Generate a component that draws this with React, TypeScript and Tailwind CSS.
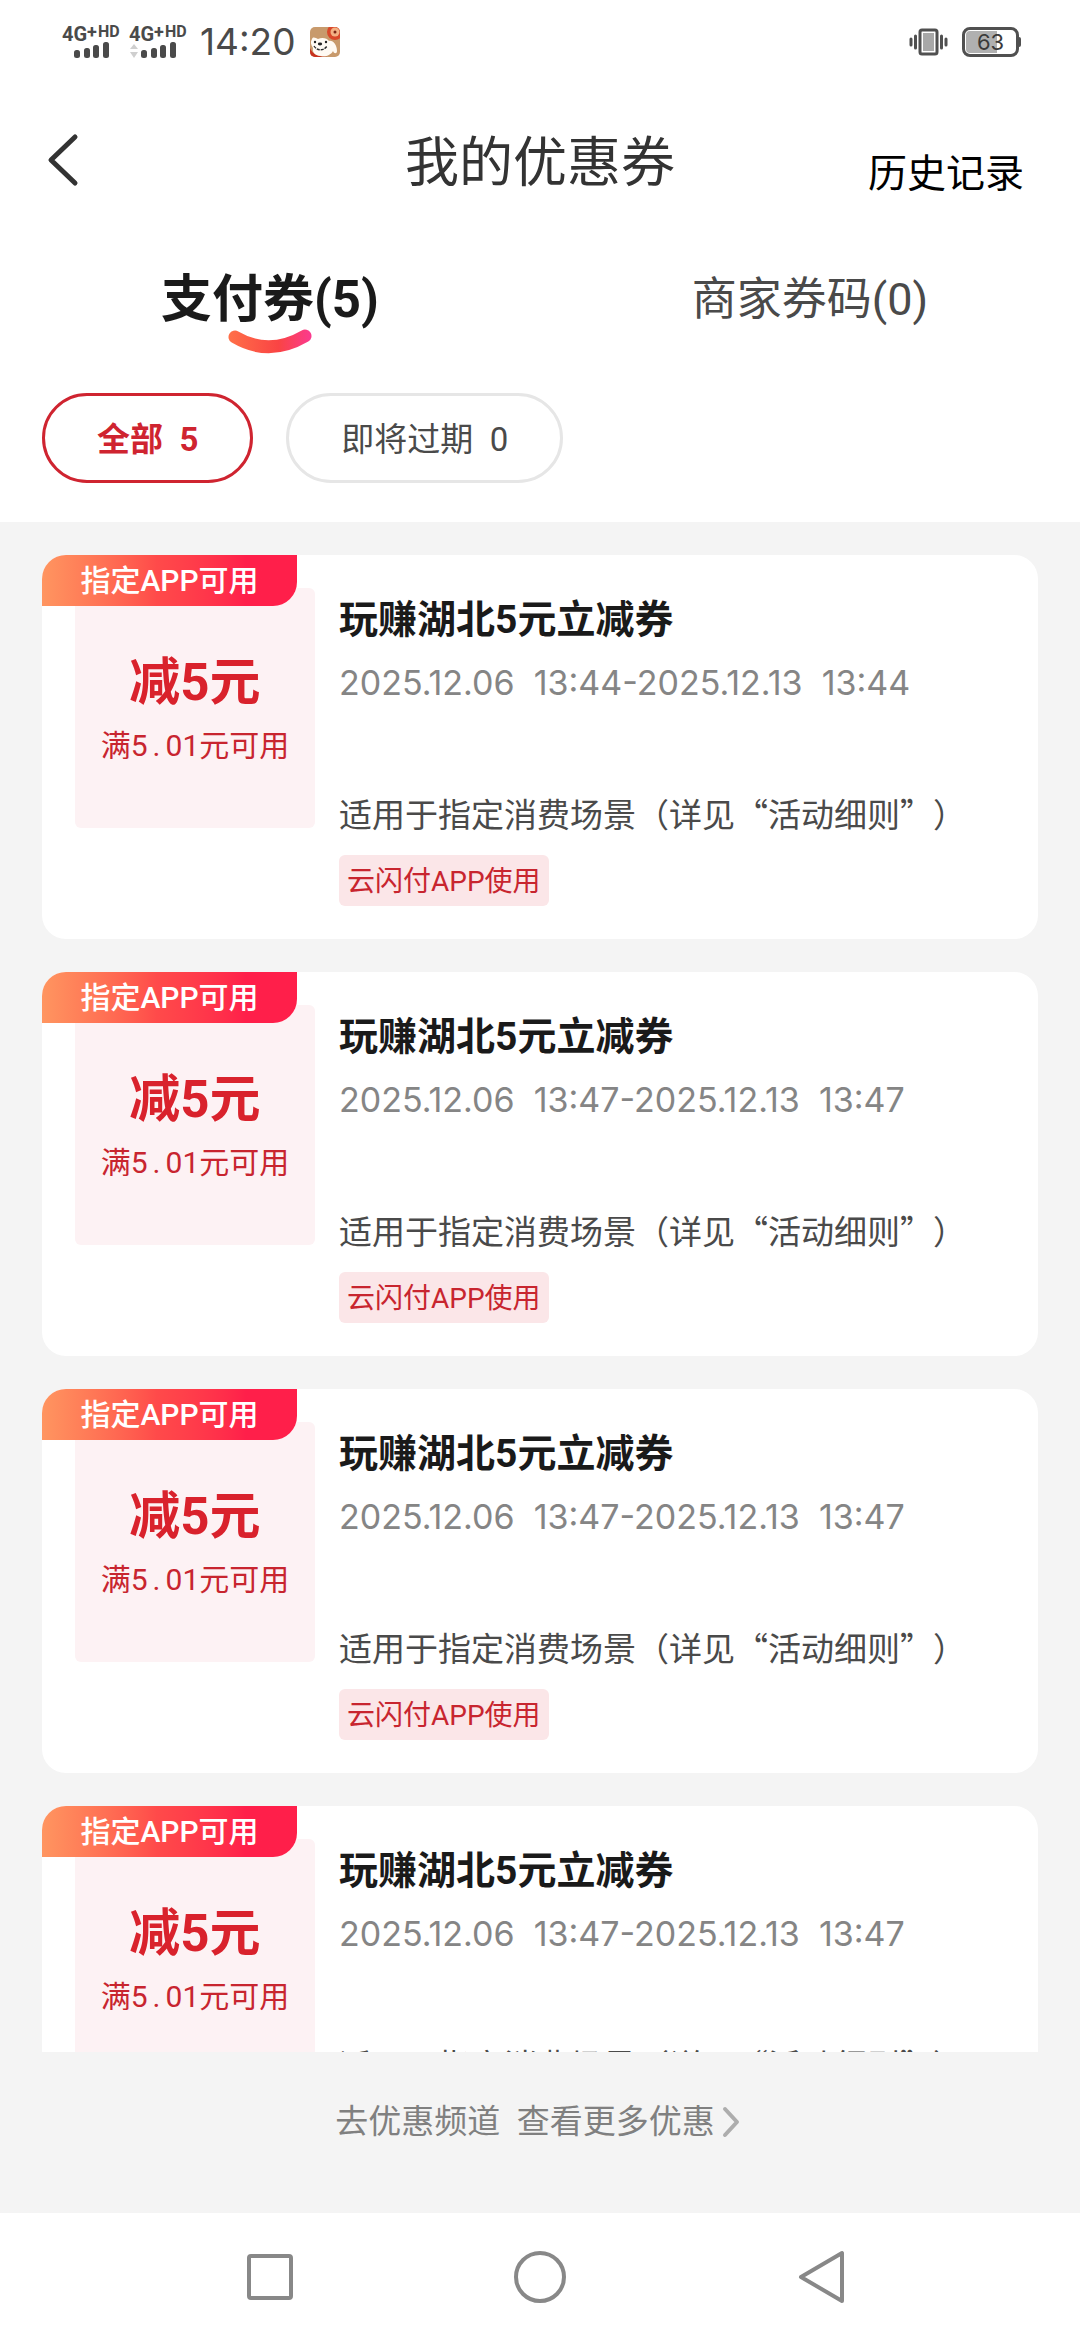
import React, { useState } from "react";

type Coupon = {
  id: number;
  badge: string;
  amount: string;
  title: string;
  start: string;
  end: string;
  scope: string;
  tag: string;
};

const times = ["13:44", "13:47", "13:47", "13:47", "13:47"];

const coupons: Coupon[] = times.map((time, i) => ({
  id: i,
  badge: "指定APP可用",
  amount: "减5元",
  title: "玩赚湖北5元立减券",
  start: `2025.12.06  ${time}`,
  end: `2025.12.13  ${time}`,
  scope: "适用于指定消费场景（详见“活动细则”）",
  tag: "云闪付APP使用",
}));

// network label + signal bars, data adds the small up/down arrows
function Signal({ data = false }: { data?: boolean }) {
  return (
    <div className="w-[59px] font-['Roboto'] font-bold text-[#4a4a4a]">
      <div className="flex h-4 items-start leading-4">
        <span className="text-[20px]">4G</span>
        <span className="text-[18px] leading-3">+</span>
        <span className="ml-px text-[16px] leading-3">HD</span>
      </div>
      <svg width="59" height="17" viewBox="0 0 59 17" fill="#4a4a4a">
        {data && <path d="M1 7l4-5 4 5zM1 10l4 6 4-6z" fill="#cfcfcf" />}
        <rect x="12" y="8" width="6" height="8" rx="2.5" />
        <rect x="22" y="6" width="6" height="10" rx="2.5" />
        <rect x="31" y="3" width="6" height="13" rx="2.5" />
        <rect x="41" y="0" width="6" height="16" rx="2.5" />
      </svg>
    </div>
  );
}

function PuppyIcon() {
  return (
    <svg width="30" height="30" viewBox="0 0 30 30">
      <defs>
        <clipPath id="puppy">
          <rect width="30" height="30" rx="5" />
        </clipPath>
      </defs>
      <g clipPath="url(#puppy)">
        <rect width="30" height="30" fill="#c89a6c" />
        <path d="M0 21c2 6 9 9 18 9H0z" fill="#c8321e" />
        <circle cx="25" cy="5" r="8" fill="#d9482a" />
        <circle cx="25" cy="5" r="4.5" fill="#f3b184" />
        <circle cx="25" cy="5" r="1.5" fill="#7c2415" />
        <path
          d="M2 12c1-3 4-1 6 0 4-2 9-1 11 2 4-1 8 4 8 10 0 3-3 3-4 0-2 4-7 6-12 5-6 0-9-4-8-8-2-3-3-6-1-9z"
          fill="#fffaf3"
        />
        <path d="M4 19c3 5 10 5 13 0" stroke="#2b2b2b" strokeWidth="1.4" strokeDasharray="3 1" fill="none" />
        <ellipse cx="10" cy="17" rx="2.2" ry="1.4" fill="#222" />
        <circle cx="5" cy="15" r="1.2" fill="#222" />
        <circle cx="16" cy="15" r="1.2" fill="#222" />
      </g>
    </svg>
  );
}

function StatusBar() {
  return (
    <div className="flex h-[84px] items-center justify-between pr-[59px] pl-[62px]">
      <div className="flex items-center">
        <Signal />
        <div className="ml-2">
          <Signal data />
        </div>
        <span className="ml-3 font-['Inter'] text-[37px] leading-9 text-[#4a4a4a]">14:20</span>
        <div className="ml-3.5">
          <PuppyIcon />
        </div>
      </div>
      <div className="flex items-center gap-3.5">
        <svg width="39" height="30" viewBox="0 0 39 30" fill="none">
          <g stroke="#505050" strokeWidth="3" strokeLinecap="round">
            <path d="M2 12v6M6.500 9v12M32.500 9v12M37 12v6" />
          </g>
          <rect x="11" y="3" width="17" height="24" rx="2" stroke="#505050" strokeWidth="3" />
          <rect x="14" y="6" width="11" height="18" fill="#a8a8a8" />
        </svg>
        <div className="flex items-center">
          <div className="relative flex h-[30px] w-[57px] items-center justify-center rounded-lg border-3 border-[#505050]">
            <div className="absolute inset-y-px left-px w-[60%] rounded-l bg-[#b0b0b0]" />
            <span className="relative font-['Inter'] text-[22px] leading-6 text-[#3a3a3a]">63</span>
          </div>
          <div className="h-2.5 w-0.5 rounded-r bg-[#505050]" />
        </div>
      </div>
    </div>
  );
}

function CouponCard({ coupon }: { coupon: Coupon }) {
  return (
    <li className="relative flex shrink-0 gap-6 rounded-3xl bg-white p-[33px]">
      <div className="absolute top-0 left-0 flex h-[51px] w-[255px] items-center justify-center rounded-tl-3xl rounded-br-3xl bg-linear-to-r from-[#ff9560] via-[#ff4a4a] via-45% to-[#ff1f4a] to-80% text-[30px] font-medium text-white">
        {coupon.badge}
      </div>
      <div className="h-60 w-60 shrink-0 rounded-md bg-[#fdf2f4] pt-[60px] text-center text-[#d9222c]">
        <div className="text-[51px] leading-[70px] font-bold">{coupon.amount}</div>
        <div className="text-[30px] leading-[56px] text-[#c8252f]">
          满5<span className="inline-block w-[18px]">.</span>01元可用
        </div>
      </div>
      <div className="min-w-0 flex-1">
        <h2 className="text-[39px] leading-[64px] font-bold text-[#1a1a1a]">{coupon.title}</h2>
        <p className="font-['Inter'] text-[34px] leading-[62px] whitespace-pre text-[#858585]">
          {coupon.start}-{coupon.end}
        </p>
        <p className="mt-[74px] font-['Noto_Sans_CJK_SC',sans-serif] text-[33px] leading-[50px] whitespace-nowrap text-[#4a4a4a] [text-spacing-trim:space-all]">
          {coupon.scope}
        </p>
        <div className="mt-[17px] inline-flex h-[51px] items-center rounded-md bg-[#fbe6e8] px-2 pt-0.5 text-[28px] text-[#c8252f]">
          {coupon.tag}
        </div>
      </div>
    </li>
  );
}

export default function App() {
  const [tab, setTab] = useState(0);
  const [filter, setFilter] = useState(0);

  const tabs = ["支付券(5)", "商家券码(0)"];
  const filters = ["全部  5", "即将过期  0"];

  return (
    <main className="flex h-screen flex-col bg-white font-['Roboto','Noto_Sans_CJK_SC',sans-serif]">
      <StatusBar />

      <header className="grid h-[156px] grid-cols-3 items-center px-[42px]">
        <button aria-label="返回" className="w-fit pb-1">
          <svg width="42" height="54" viewBox="0 0 42 54" fill="none" stroke="#333" strokeWidth="5" strokeLinecap="round" strokeLinejoin="round">
            <path d="M33 4L9 27l24 23" />
          </svg>
        </button>
        <h1 className="pt-1 text-center text-[54px] leading-[60px] whitespace-nowrap text-[#333]">我的优惠券</h1>
        <a href="#history" className="pt-6 pr-3.5 text-right text-[39px] text-black">
          历史记录
        </a>
      </header>

      <nav className="grid h-[120px] grid-cols-2">
        {tabs.map((name, i) => (
          <button
            key={name}
            onClick={() => setTab(i)}
            className={
              tab === i
                ? "relative text-[51px] font-bold text-[#1a1a1a]"
                : "relative text-[45px] text-[#4a4a4a]"
            }
          >
            {name}
            {/* smile under the active tab */}
            {tab === i && (
              <svg className="absolute inset-x-0 bottom-1.5 mx-auto" width="84" height="25" viewBox="0 0 84 25" fill="none">
                <defs>
                  <linearGradient id="smile" x1="0" y1="0" x2="84" y2="0" gradientUnits="userSpaceOnUse">
                    <stop offset="0" stopColor="#ff7048" />
                    <stop offset="0.6" stopColor="#fa4444" />
                    <stop offset="1" stopColor="#fb3a90" />
                  </linearGradient>
                </defs>
                <path d="M7 8Q41 28 77 7" stroke="url(#smile)" strokeWidth="13" strokeLinecap="round" />
              </svg>
            )}
          </button>
        ))}
      </nav>

      <div className="flex gap-[33px] px-[42px] pt-[33px] pb-[39px]">
        {filters.map((name, i) => (
          <button
            key={name}
            onClick={() => setFilter(i)}
            className={
              filter === i
                ? "h-[90px] rounded-full border-3 border-[#cf2430] px-[52px] pt-1 text-[33px] font-bold whitespace-pre text-[#cf2430]"
                : "h-[90px] rounded-full border-3 border-[#e6e6e6] px-[52px] pt-1 text-[33px] whitespace-pre text-[#4a4a4a]"
            }
          >
            {name}
          </button>
        ))}
      </div>

      <ul className="flex min-h-0 flex-1 flex-col gap-[33px] overflow-y-auto bg-[#f4f4f4] px-[42px] pt-[33px] [scrollbar-width:none]">
        {coupons.map((coupon) => (
          <CouponCard key={coupon.id} coupon={coupon} />
        ))}
      </ul>

      <div className="flex h-[161px] items-center justify-center bg-[#f4f4f4] pr-1 pb-[22px]">
        <a href="#more" className="flex items-center gap-1.5 text-[33px] leading-[50px] whitespace-pre text-[#808080]">
          去优惠频道  查看更多优惠
          <svg width="20" height="32" viewBox="0 0 20 32" fill="none" stroke="#adadad" strokeWidth="4" strokeLinecap="round" strokeLinejoin="round">
            <path d="M4 3l12 13L4 29" />
          </svg>
        </a>
      </div>

      <footer className="grid h-[127px] grid-cols-3 items-center justify-items-center px-[12.5%]">
        <button aria-label="最近任务">
          <svg width="56" height="56" viewBox="0 0 56 56" fill="none" stroke="#888" strokeWidth="4">
            <rect x="7" y="7" width="42" height="42" rx="2" />
          </svg>
        </button>
        <button aria-label="主屏幕">
          <svg width="56" height="56" viewBox="0 0 56 56" fill="none" stroke="#888" strokeWidth="4">
            <circle cx="28" cy="28" r="24" />
          </svg>
        </button>
        <button aria-label="后退">
          <svg width="72" height="56" viewBox="0 0 72 56" fill="none" stroke="#888" strokeWidth="4" strokeLinejoin="round">
            <path d="M68 4v48L27 28z" />
          </svg>
        </button>
      </footer>
    </main>
  );
}
